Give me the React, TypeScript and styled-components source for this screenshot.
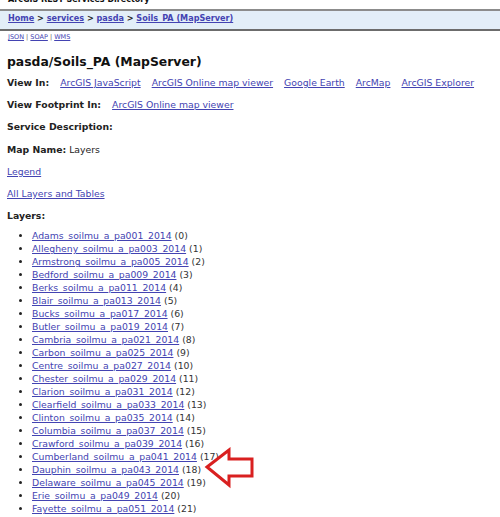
import styled, { createGlobalStyle } from 'styled-components';

const linkColor = '#4343b2';
const textColor = '#222';

const GlobalStyle = createGlobalStyle`
  body {
    margin: 0;
    background: #fff;
    font-family: "DejaVu Sans", Verdana, sans-serif;
    font-size: 9.3px;
    line-height: 13px;
    color: ${textColor};
  }
  a {
    color: ${linkColor};
  }
`;

const layers = [
  'Adams_soilmu_a_pa001_2014',
  'Allegheny_soilmu_a_pa003_2014',
  'Armstrong_soilmu_a_pa005_2014',
  'Bedford_soilmu_a_pa009_2014',
  'Berks_soilmu_a_pa011_2014',
  'Blair_soilmu_a_pa013_2014',
  'Bucks_soilmu_a_pa017_2014',
  'Butler_soilmu_a_pa019_2014',
  'Cambria_soilmu_a_pa021_2014',
  'Carbon_soilmu_a_pa025_2014',
  'Centre_soilmu_a_pa027_2014',
  'Chester_soilmu_a_pa029_2014',
  'Clarion_soilmu_a_pa031_2014',
  'Clearfield_soilmu_a_pa033_2014',
  'Clinton_soilmu_a_pa035_2014',
  'Columbia_soilmu_a_pa037_2014',
  'Crawford_soilmu_a_pa039_2014',
  'Cumberland_soilmu_a_pa041_2014',
  'Dauphin_soilmu_a_pa043_2014',
  'Delaware_soilmu_a_pa045_2014',
  'Erie_soilmu_a_pa049_2014',
  'Fayette_soilmu_a_pa051_2014',
  'Franklin_soilmu_a_pa055_2014',
  'Fulton_soilmu_a_pa057_2014',
];

const viewIn = ['ArcGIS JavaScript', 'ArcGIS Online map viewer', 'Google Earth', 'ArcMap', 'ArcGIS Explorer'];

export default function App() {
  return (
    <Page>
      <GlobalStyle />
      <SiteTitle>ArcGIS REST Services Directory</SiteTitle>
      <Breadcrumbs>
        <a href="#">Home</a> &gt; <a href="#">services</a> &gt; <a href="#">pasda</a> &gt; <a href="#">Soils_PA (MapServer)</a>
      </Breadcrumbs>
      <Formats>
        <a href="#">JSON</a> | <a href="#">SOAP</a> | <a href="#">WMS</a>
      </Formats>
      <Content>
        <Heading>pasda/Soils_PA (MapServer)</Heading>
        <Row>
          <Label>View In:</Label>
          <Links>
            {viewIn.map((v) => (
              <a key={v} href="#">{v}</a>
            ))}
          </Links>
        </Row>
        <Row>
          <Label>View Footprint In:</Label>
          <Links>
            <a href="#">ArcGIS Online map viewer</a>
          </Links>
        </Row>
        <Row><Label>Service Description:</Label></Row>
        <Row><span><Label>Map Name:</Label> Layers</span></Row>
        <Row><a href="#">Legend</a></Row>
        <Row><a href="#">All Layers and Tables</a></Row>
        <Row><Label>Layers:</Label></Row>
        <LayerList>
          {layers.map((name, i) => (
            <li key={name}>
              <a href="#">{name}</a> <Count>({i})</Count>
            </li>
          ))}
        </LayerList>
      </Content>
      <Arrow width="52" height="42" viewBox="0 0 52 42">
        <path
          d="M3 20 L25 3 L25 12 L48 12 L48 29 L25 29 L25 38 Z"
          fill="#fff"
          stroke="#d92020"
          strokeWidth="3"
          strokeLinejoin="miter"
        />
      </Arrow>
    </Page>
  );
}

const Page = styled.div`
  position: relative;
  width: 500px;
  height: 517px;
  overflow: hidden;
`;

const SiteTitle = styled.div`
  font-weight: bold;
  font-size: 8px;
  line-height: 10px;
  padding-left: 8px;
  margin-top: -5px;
  color: #111;
`;

const Breadcrumbs = styled.div`
  margin-top: 4px;
  height: 18px;
  line-height: 15px;
  font-size: 8.1px;
  border-top: 2px solid #8c8c8c;
  border-bottom: 2px solid #6c6c6c;
  background: #e3eef8;
  padding: 0 8px;
  font-weight: bold;
  color: ${textColor};

  a {
    color: ${linkColor};
  }
`;

const Formats = styled.div`
  font-size: 6.5px;
  line-height: 8px;
  padding: 2px 8px 0;
  color: #555;
`;

const Content = styled.div`
  padding: 0 7px;
`;

const Heading = styled.div`
  font-size: 12.4px;
  font-weight: bold;
  line-height: 15px;
  margin: 13px 0 7px;
  color: #111;
`;

const Row = styled.div`
  margin-bottom: 9.2px;
  display: flex;
  gap: 11px;
`;

const Label = styled.b`
  font-weight: bold;
`;

const Links = styled.span`
  display: flex;
  gap: 11px;
`;

const LayerList = styled.ul`
  margin: -2px 0 0;
  padding-left: 25px;
  list-style: disc;

  li {
    line-height: 13px;
  }
`;

const Count = styled.span`
  color: #333;
`;

const Arrow = styled.svg`
  position: absolute;
  left: 204px;
  top: 447px;
`;
